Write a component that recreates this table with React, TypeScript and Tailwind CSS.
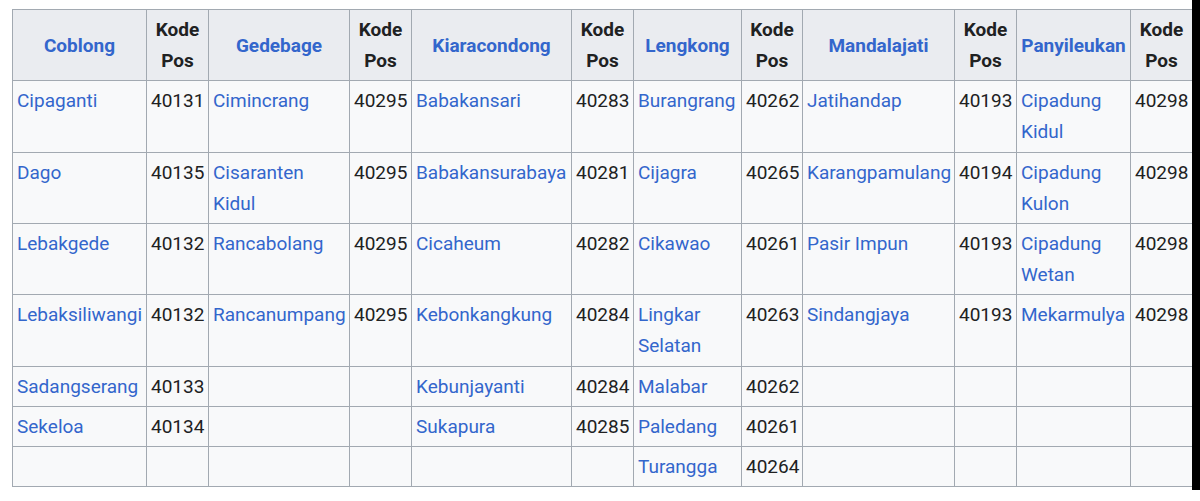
import React from "react";

type Entry = [string, string] | null;

const districts: { name: string; rows: Entry[] }[] = [
    {
        name: "Coblong",
        rows: [
            ["Cipaganti", "40131"],
            ["Dago", "40135"],
            ["Lebakgede", "40132"],
            ["Lebaksiliwangi", "40132"],
            ["Sadangserang", "40133"],
            ["Sekeloa", "40134"],
            null,
        ],
    },
    {
        name: "Gedebage",
        rows: [
            ["Cimincrang", "40295"],
            ["Cisaranten Kidul", "40295"],
            ["Rancabolang", "40295"],
            ["Rancanumpang", "40295"],
            null,
            null,
            null,
        ],
    },
    {
        name: "Kiaracondong",
        rows: [
            ["Babakansari", "40283"],
            ["Babakansurabaya", "40281"],
            ["Cicaheum", "40282"],
            ["Kebonkangkung", "40284"],
            ["Kebunjayanti", "40284"],
            ["Sukapura", "40285"],
            null,
        ],
    },
    {
        name: "Lengkong",
        rows: [
            ["Burangrang", "40262"],
            ["Cijagra", "40265"],
            ["Cikawao", "40261"],
            ["Lingkar Selatan", "40263"],
            ["Malabar", "40262"],
            ["Paledang", "40261"],
            ["Turangga", "40264"],
        ],
    },
    {
        name: "Mandalajati",
        rows: [
            ["Jatihandap", "40193"],
            ["Karangpamulang", "40194"],
            ["Pasir Impun", "40193"],
            ["Sindangjaya", "40193"],
            null,
            null,
            null,
        ],
    },
    {
        name: "Panyileukan",
        rows: [
            ["Cipadung Kidul", "40298"],
            ["Cipadung Kulon", "40298"],
            ["Cipadung Wetan", "40298"],
            ["Mekarmulya", "40298"],
            null,
            null,
            null,
        ],
    },
];

// lebar kolom nama kelurahan + kolom kode pos
const nameWidths = ["w-[134px]", "w-[141px]", "w-[160px]", "w-[108px]", "w-[152px]", "w-[114px]"];
const posWidths = ["w-[62px]", "w-[62px]", "w-[62px]", "w-[61px]", "w-[62px]", "w-[62px]"];

const cell = "border border-[#a2a9b1] p-[4px] align-top";
const head = "border border-[#a2a9b1] p-[4px] bg-[#eaecf0] text-center align-middle font-bold";

const App: React.FC = () => {
    const rowCount = 7;

    return (
        <div className="flex w-[1200px] h-[501px] overflow-hidden bg-white font-['Roboto',sans-serif] text-[19px] leading-[31.15px] text-[#202122]">
            <div className="w-[1192px] shrink-0 overflow-hidden pl-[12px] pt-[9px]">
                <table className="table-fixed border-collapse w-[1180px] bg-[#f8f9fa]">
                    <colgroup>
                        {districts.map((d, i) => (
                            <React.Fragment key={d.name}>
                                <col className={nameWidths[i]} />
                                <col className={posWidths[i]} />
                            </React.Fragment>
                        ))}
                    </colgroup>
                    <thead>
                        <tr>
                            {districts.map((d) => (
                                <React.Fragment key={d.name}>
                                    <th className={head}>
                                        <a href="#" className="text-[#3366cc]">
                                            {d.name}
                                        </a>
                                    </th>
                                    <th className={head}>Kode Pos</th>
                                </React.Fragment>
                            ))}
                        </tr>
                    </thead>
                    <tbody>
                        {Array.from({ length: rowCount }).map((_, r) => (
                            <tr key={r}>
                                {districts.map((d) => {
                                    const entry = d.rows[r];
                                    return (
                                        <React.Fragment key={d.name}>
                                            <td className={cell}>
                                                {entry && (
                                                    <a href="#" className="text-[#3366cc]">
                                                        {entry[0]}
                                                    </a>
                                                )}
                                            </td>
                                            <td className={cell}>{entry ? entry[1] : ""}</td>
                                        </React.Fragment>
                                    );
                                })}
                            </tr>
                        ))}
                    </tbody>
                </table>
            </div>
            {/* bilah hitam di tepi kanan */}
            <div className="w-[8px] h-[490px] shrink-0 bg-black" />
        </div>
    );
};

export default App;
